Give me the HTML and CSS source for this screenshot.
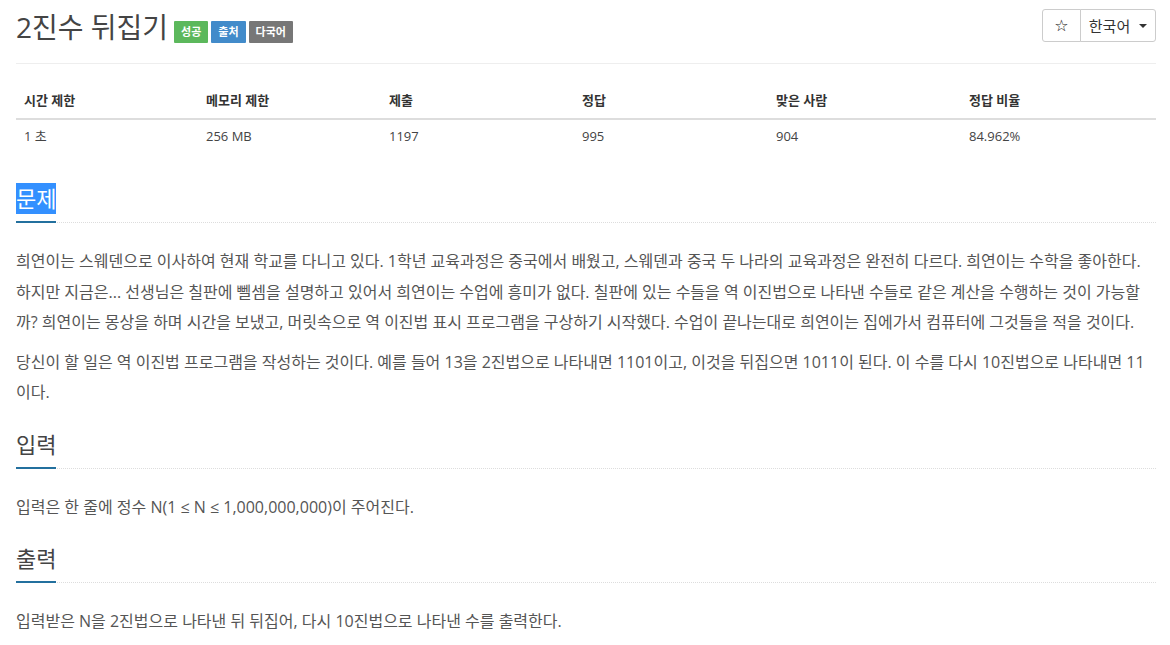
FILE: index.html
```html
<!DOCTYPE html>
<html lang="ko">
<head>
<meta charset="utf-8">
<title>2진수 뒤집기</title>
<link rel="stylesheet" href="styles.css">
</head>
<body>
<div class="container">
  <div class="page-header">
    <h1 class="title">
      <span class="title-text">2진수 뒤집기</span>
      <span class="label label-success">성공</span>
      <span class="label label-primary">출처</span>
      <span class="label label-default">다국어</span>
    </h1>
    <div class="btn-group">
      <button class="btn btn-star">☆</button>
      <button class="btn btn-lang">한국어 <span class="caret"></span></button>
    </div>
  </div>

  <table class="info">
    <thead>
      <tr>
        <th class="c1">시간 제한</th>
        <th class="c2">메모리 제한</th>
        <th class="c3">제출</th>
        <th class="c4">정답</th>
        <th class="c5">맞은 사람</th>
        <th class="c6">정답 비율</th>
      </tr>
    </thead>
    <tbody>
      <tr>
        <td>1 초</td>
        <td>256 MB</td>
        <td>1197</td>
        <td>995</td>
        <td>904</td>
        <td>84.962%</td>
      </tr>
    </tbody>
  </table>

  <section class="problem-section">
    <div class="headline"><h2><span class="sel">문제</span></h2></div>
    <div class="problem-text">
      <p>희연이는 스웨덴으로 이사하여 현재 학교를 다니고 있다. 1학년 교육과정은 중국에서 배웠고, 스웨덴과 중국 두 나라의 교육과정은 완전히 다르다. 희연이는 수학을 좋아한다.<br>하지만 지금은... 선생님은 칠판에 뻴셈을 설명하고 있어서 희연이는 수업에 흥미가 없다. 칠판에 있는 수들을 역 이진법으로 나타낸 수들로 같은 계산을 수행하는 것이 가능할<br>까? 희연이는 몽상을 하며 시간을 보냈고, 머릿속으로 역 이진법 표시 프로그램을 구상하기 시작했다. 수업이 끝나는대로 희연이는 집에가서 컴퓨터에 그것들을 적을 것이다.</p>
      <p>당신이 할 일은 역 이진법 프로그램을 작성하는 것이다. 예를 들어 13을 2진법으로 나타내면 1101이고, 이것을 뒤집으면 1011이 된다. 이 수를 다시 10진법으로 나타내면 11<br>이다.</p>
    </div>
  </section>

  <section class="problem-section">
    <div class="headline"><h2>입력</h2></div>
    <div class="problem-text">
      <p>입력은 한 줄에 정수 N(1 ≤ N ≤ 1,000,000,000)이 주어진다.</p>
    </div>
  </section>

  <section class="problem-section">
    <div class="headline"><h2>출력</h2></div>
    <div class="problem-text">
      <p>입력받은 N을 2진법으로 나타낸 뒤 뒤집어, 다시 10진법으로 나타낸 수를 출력한다.</p>
    </div>
  </section>
</div>
</body>
</html>
```

FILE: styles.css
```css
html, body {
  margin: 0;
  padding: 0;
  background: #fff;
}

body {
  font-family: "Open Sans", "Noto Sans CJK KR", sans-serif;
  color: #555;
}

.container {
  padding: 0 14px 0 16px;
}

.page-header {
  display: flex;
  justify-content: space-between;
  align-items: flex-start;
  padding-top: 9px;
  padding-bottom: 18px;
  border-bottom: 1px solid #eee;
}

.title {
  margin: 0;
  display: flex;
  align-items: center;
  font-weight: normal;
  height: 36px;
}

.title-text {
  font-size: 28px;
  line-height: 36px;
  color: #444;
  margin-right: 6px;
}

.label {
  display: inline-block;
  height: 22px;
  line-height: 22px;
  padding: 0 7px;
  margin-top: 10px;
  margin-right: 3px;
  font-size: 11px;
  font-weight: bold;
  color: #fff;
  border-radius: 1px;
}

.label-success { background: #5cb85c; }
.label-primary { background: #428bca; }
.label-default { background: #777; }

.btn-group {
  display: flex;
}

.btn {
  height: 33px;
  margin: 0;
  background: #fff;
  border: 1px solid #ccc;
  color: #333;
  font-family: "Open Sans", "Noto Sans CJK KR", sans-serif;
  padding: 0;
  cursor: pointer;
}

.btn-star {
  width: 39px;
  border-radius: 3px 0 0 3px;
  font-family: "DejaVu Sans", sans-serif;
  font-size: 16px;
  color: #222;
}

.btn-lang {
  width: 76px;
  margin-left: -1px;
  border-radius: 0 3px 3px 0;
  font-size: 15px;
  display: flex;
  align-items: center;
  justify-content: center;
  gap: 6px;
}

.caret {
  display: inline-block;
  width: 0;
  height: 0;
  border-left: 4px solid transparent;
  border-right: 4px solid transparent;
  border-top: 4px solid #333;
  margin-left: 3px;
}

.info {
  width: 100%;
  table-layout: fixed;
  border-collapse: collapse;
  margin-top: 18px;
  margin-bottom: 27px;
  font-size: 13px;
}

.info th {
  text-align: left;
  font-weight: bold;
  color: #333;
  font-size: 13px;
  line-height: 20px;
  padding: 8px;
  border-bottom: 2px solid #ddd;
}

.info td {
  line-height: 20px;
  padding: 6px 8px 10px;
  color: #444;
}

.c1 { width: 166px; }
.c2 { width: 167px; }
.c3 { width: 177px; }
.c4 { width: 178px; }
.c5 { width: 177px; }

.problem-section {
  margin-top: 21px;
}

.headline {
  display: flex;
  border-bottom: 1px dotted #ddd;
}

.headline h2 {
  margin: 0 0 -1px 0;
  font-size: 22px;
  font-weight: normal;
  line-height: 31px;
  padding-bottom: 7px;
  border-bottom: 2px solid #23709e;
  color: #444;
}

.sel {
  display: inline-block;
  background: #3390ff;
  color: #fff;
}

.problem-text {
  padding-top: 23px;
}

.problem-text p {
  margin: 0 0 9px 0;
  font-size: 16px;
  line-height: 30.5px;
  letter-spacing: 0;
  color: #555;
}
```
